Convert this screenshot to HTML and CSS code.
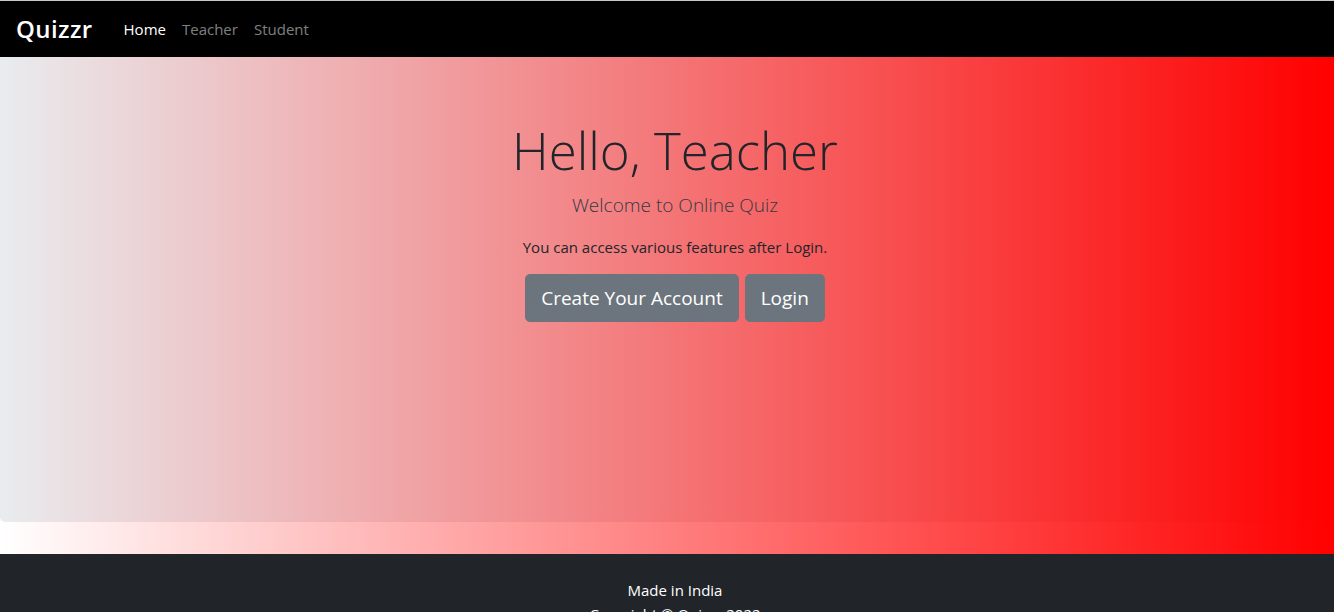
FILE: index.html
```html
<!DOCTYPE html>
<html lang="en">
<head>
<meta charset="utf-8">
<title>Quizzr</title>
<link rel="stylesheet" href="styles.css">
</head>
<body>
<nav class="navbar">
  <a class="brand" href="#">Quizzr</a>
  <ul class="nav">
    <li><a class="nav-link active" href="#">Home</a></li>
    <li><a class="nav-link" href="#">Teacher</a></li>
    <li><a class="nav-link" href="#">Student</a></li>
  </ul>
</nav>
<main class="jumbotron">
  <h1 class="display">Hello, Teacher</h1>
  <p class="lead">Welcome to Online Quiz</p>
  <p class="info">You can access various features after Login.</p>
  <div class="actions">
    <a class="btn" href="#">Create Your Account</a>
    <a class="btn" href="#">Login</a>
  </div>
</main>
<footer class="footer">
  <p>Made in India</p>
  <p>Copyright © Quizzr 2022</p>
</footer>
</body>
</html>
```
FILE: styles.css
```css
* { box-sizing: border-box; }
html, body { margin: 0; padding: 0; }
body {
  font-family: "Open Sans", "Noto Sans", sans-serif;
  font-size: 16px;
  line-height: 1.5;
  color: #212529;
  background: linear-gradient(to right, #ffffff, #ff0000);
  border-top: 1px solid #c8c8c8;
}
.navbar {
  display: flex;
  align-items: center;
  background: #000;
  height: 56px;
  padding: 8px 16px;
}
.brand {
  color: #fff;
  text-decoration: none;
  font-size: 24px;
  font-weight: 600;
  margin-right: 23px;
  letter-spacing: 0.4px;
}
.nav {
  display: flex;
  list-style: none;
  margin: 0;
  padding: 0;
}
.nav-link {
  display: block;
  padding: 8px 8px;
  color: rgba(255,255,255,.5);
  text-decoration: none;
  font-size: 15px;
}
.nav-link.active { color: #fff; }
.jumbotron {
  min-height: 465px;
  padding: 64px 32px 64px 48px;
  margin-bottom: 32px;
  border-radius: 0 0 4.8px 4.8px;
  background: linear-gradient(to right, #e9ecef, #ff0000);
  text-align: center;
}
.display {
  margin: -1px 0 10px;
  font-size: 51px;
  font-weight: 300;
  line-height: 1.2;
  color: #212529;
}
.lead {
  margin: 0 0 16px;
  font-size: 19px;
  font-weight: 300;
  color: #343a40;
}
.info {
  margin: 0 0 16px;
  font-size: 15px;
}
.actions {
  display: flex;
  justify-content: center;
  gap: 6px;
}
.btn {
  display: inline-block;
  padding: 8px 15px;
  font-size: 19px;
  line-height: 30px;
  color: #fff;
  background: #6c757d;
  border: 1px solid #6c757d;
  border-radius: 4.8px;
  text-decoration: none;
}
.footer {
  background: #212529;
  color: #fff;
  text-align: center;
  padding: 24px 0 24px 16px;
  font-size: 15px;
}
.footer p { margin: 0; line-height: 24px; }
```
